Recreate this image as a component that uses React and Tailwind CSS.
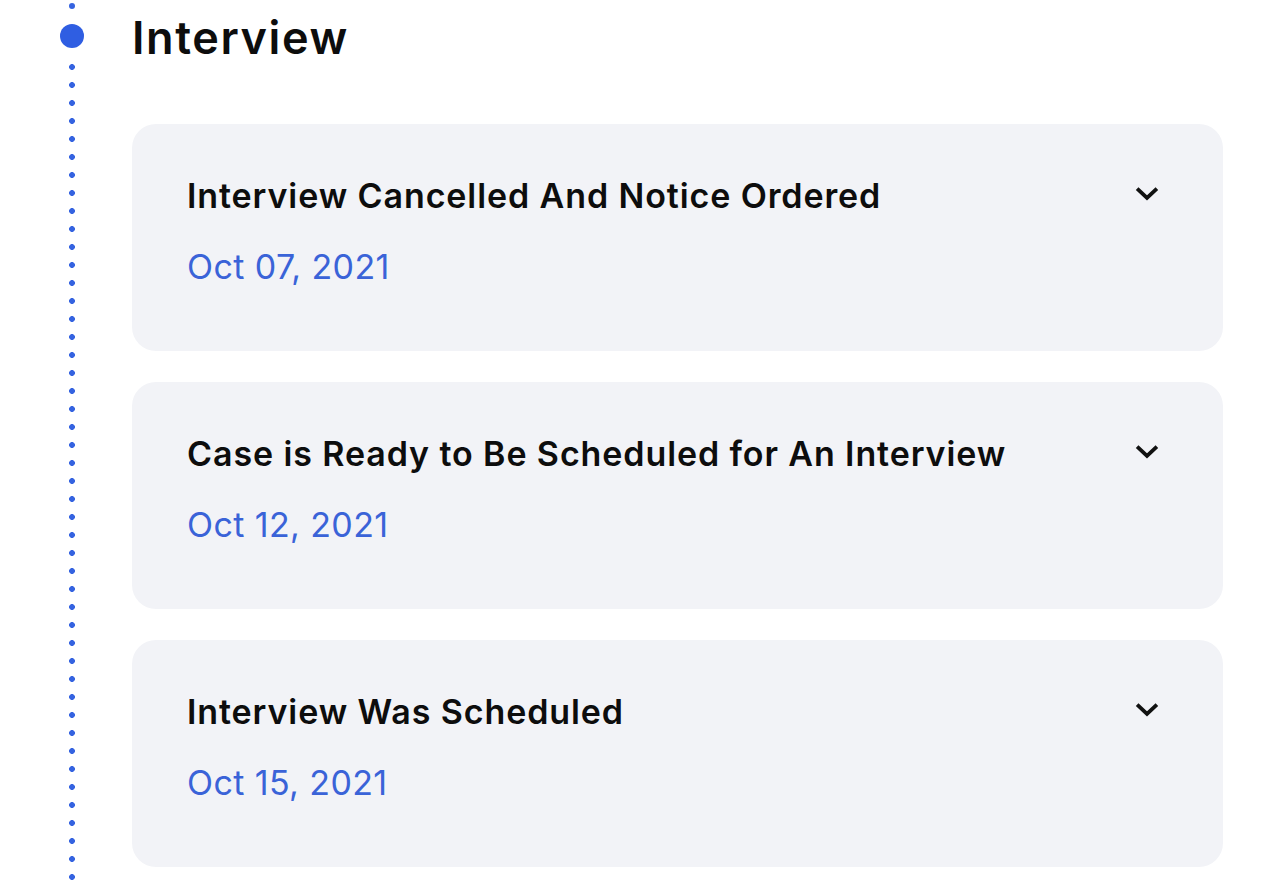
import React from "react";

const items = [
  { title: "Interview Cancelled And Notice Ordered", date: "Oct 07, 2021" },
  { title: "Case is Ready to Be Scheduled for An Interview", date: "Oct 12, 2021" },
  { title: "Interview Was Scheduled", date: "Oct 15, 2021" },
];

function Chevron() {
  return (
    <svg width="24" height="16" viewBox="0 0 24 16" fill="none" className="mt-[10px]">
      <path d="M3.5 4 L12 12 L20.5 4" stroke="#111" strokeWidth="3.8" strokeLinecap="square" strokeLinejoin="miter" />
    </svg>
  );
}

export default function App() {
  return (
    <div className="h-[888px] w-full overflow-hidden bg-white font-['Inter',sans-serif]">
      <div className="flex">
        <div className="relative w-[132px] shrink-0 self-stretch">
          <div className="absolute left-[69px] top-[3px] h-[6px] w-[6px] rounded-full bg-[#3563e0]" />
          <div className="absolute left-[60px] top-[24px] h-[24px] w-[24px] rounded-full bg-[#2f5ee2]" />
          <div className="absolute left-[66px] top-[58px] bottom-[-40px] w-[12px] bg-[radial-gradient(circle,#3563e0_2.6px,transparent_3.2px)] bg-[length:12px_18px] bg-repeat-y" />
        </div>
        <div className="flex-1 pr-[61px]">
          <h1 className="pt-[10px] text-[45px] font-semibold leading-[56px] tracking-[1.6px] text-[#0d0d0d]">
            Interview
          </h1>
          <div className="mt-[58px] flex flex-col gap-[31px]">
            {items.map((it) => (
              <div
                key={it.title}
                className="flex h-[227px] items-start justify-between rounded-[24px] bg-[#f2f3f7] pl-[55px] pr-[64px] pt-[52px]"
              >
                <div className="flex flex-col">
                  <div className="text-[34px] font-semibold leading-[40px] tracking-[0.9px] text-[#0d0d0d]">{it.title}</div>
                  <div className="mt-[31px] text-[34px] font-normal leading-[40px] tracking-[0.4px] text-[#3a63d8]">{it.date}</div>
                </div>
                <Chevron />
              </div>
            ))}
          </div>
        </div>
      </div>
    </div>
  );
}
